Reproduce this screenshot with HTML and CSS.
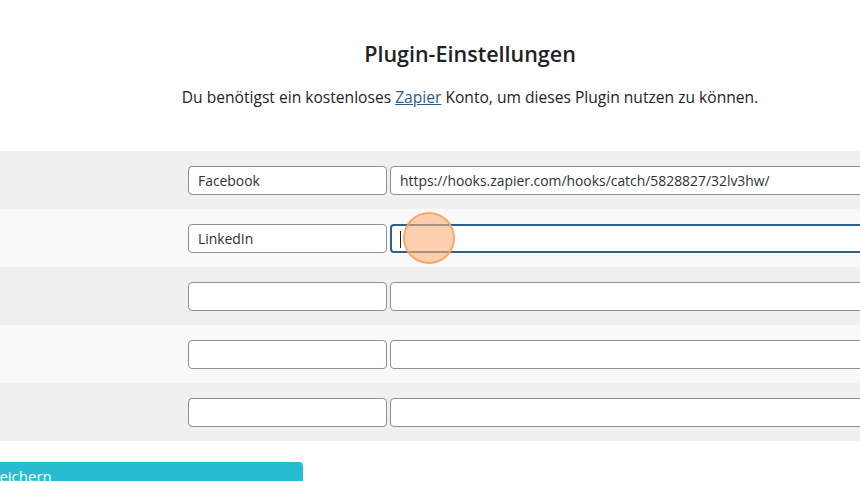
FILE: index.html
```html
<!DOCTYPE html>
<html lang="de">
<head>
<meta charset="utf-8">
<title>Plugin-Einstellungen</title>
<link rel="stylesheet" href="styles.css">
</head>
<body>
<main class="page">
  <header class="head">
    <h1 class="title">Plugin-Einstellungen</h1>
    <p class="intro">Du benötigst ein kostenloses <a href="#" class="link">Zapier</a> Konto, um dieses Plugin nutzen zu können.</p>
  </header>
  <div class="rows">
    <div class="row row-dark">
      <div class="label"></div>
      <div class="fields">
        <div class="input name">Facebook</div>
        <div class="input url">https://hooks.zapier.com/hooks/catch/5828827/32lv3hw/</div>
      </div>
    </div>
    <div class="row row-light">
      <div class="label"></div>
      <div class="fields">
        <div class="input name">LinkedIn</div>
        <div class="input url focused"><span class="caret"></span><span class="click"></span></div>
      </div>
    </div>
    <div class="row row-dark">
      <div class="label"></div>
      <div class="fields">
        <div class="input name"></div>
        <div class="input url"></div>
      </div>
    </div>
    <div class="row row-light">
      <div class="label"></div>
      <div class="fields">
        <div class="input name"></div>
        <div class="input url"></div>
      </div>
    </div>
    <div class="row row-dark">
      <div class="label"></div>
      <div class="fields">
        <div class="input name"></div>
        <div class="input url"></div>
      </div>
    </div>
  </div>
  <div class="actions">
    <button class="save" type="button">Speichern</button>
  </div>
</main>
</body>
</html>
```
FILE: styles.css
```css
html, body {
  margin: 0;
  padding: 0;
  background: #ffffff;
  overflow: hidden;
}
body {
  font-family: "Open Sans", "Noto Sans", "Liberation Sans", sans-serif;
  color: #1d2327;
  width: 860px;
  height: 481px;
}
.page {
  width: 860px;
}
.head {
  width: 940px;
  text-align: center;
  padding-top: 38px;
}
.title {
  margin: 0;
  font-size: 21.5px;
  line-height: 32px;
  font-weight: 600;
  color: #1d2327;
}
.intro {
  margin: 15px 0 0;
  font-size: 15.6px;
  line-height: 24px;
  color: #1d2327;
}
.link {
  color: #2c5b8a;
  text-decoration: underline;
}
.rows {
  margin-top: 42px;
}
.row {
  display: flex;
  height: 58px;
  align-items: center;
}
.row-dark { background: #f0f0f0; }
.row-light { background: #f9f9f9; }
.label {
  width: 188px;
  flex: none;
}
.fields {
  display: flex;
  gap: 3px;
  flex: none;
}
.input {
  box-sizing: border-box;
  height: 29px;
  background: #ffffff;
  border: 1px solid #8c8f94;
  border-radius: 4px;
  font-size: 13.9px;
  line-height: 27px;
  padding: 0 9px;
  color: #2c3338;
  white-space: nowrap;
  position: relative;
}
.name { width: 199px; }
.url { width: 600px; }
.focused {
  border: 2px solid #2f5f8b;
  padding-left: 8px;
}
.caret {
  display: inline-block;
  width: 1px;
  height: 17px;
  background: #1d2327;
  vertical-align: middle;
  margin-bottom: 2px;
}
.click {
  position: absolute;
  left: 11px;
  top: -14px;
  width: 52px;
  height: 52px;
  border-radius: 50%;
  background: rgba(252, 178, 124, 0.6);
  border: 2px solid rgba(249, 160, 90, 0.85);
  box-sizing: border-box;
}
.actions {
  padding-top: 21px;
}
.save {
  margin-left: -31px;
  height: 40px;
  width: 334px;
  border: none;
  border-radius: 4px;
  background: #27bccf;
  color: #ffffff;
  font-family: "Open Sans", "Noto Sans", sans-serif;
  font-size: 15px;
  text-align: left;
  padding: 0 0 12px 13px;
  line-height: 20px;
}
```
